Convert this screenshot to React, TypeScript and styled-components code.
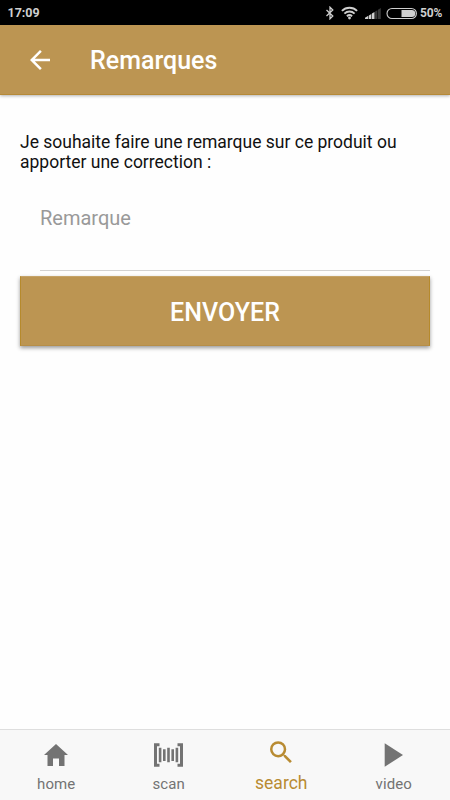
import React from 'react';
import styled, { createGlobalStyle } from 'styled-components';

const Global = createGlobalStyle`
  * { box-sizing: border-box; }
  html, body { margin: 0; background: #fff; }
  body, button, textarea { font-family: Roboto, sans-serif; }
  button { border: 0; padding: 0; cursor: pointer; }
  svg { display: block; }
`;

const Screen = styled.div`
  width: 100%;
  height: 100vh;
  display: flex;
  flex-direction: column;
  background: #fefefe;
  overflow: hidden;
`;

const StatusBar = styled.div`
  height: 25px;
  flex: none;
  display: flex;
  align-items: center;
  justify-content: space-between;
  padding: 0 8px 0 7.5px;
  background: #000;
  color: #cfcfcf;
  font-size: 12.5px;
  font-weight: 700;
`;

const StatusIcons = styled.div`
  display: flex;
  align-items: center;
`;

const Percent = styled.span`
  width: 22px;
  font-size: 12px;
  letter-spacing: -0.1px;
  margin-left: 3px;
`;

const Header = styled.header`
  height: 70px;
  flex: none;
  display: flex;
  align-items: center;
  padding-left: 30px;
  background: #bc9552;
  border-bottom: 1px solid #b68a38;
  box-shadow: 0 1px 3px rgba(0, 0, 0, 0.3);
`;

const BackButton = styled.button`
  width: 60px;
  background: none;
  color: #fff;
`;

const Title = styled.h1`
  margin: 2px 0 0;
  color: #fff;
  font-size: 25px;
  line-height: 30px;
  font-weight: 500;
`;

const Content = styled.main`
  flex: 1;
  padding: 37px 20px 0;
`;

const Intro = styled.p`
  margin: 0;
  font-size: 17.5px;
  line-height: 20px;
  color: #111;
`;

const Field = styled.div`
  height: 99px;
  margin-left: 20px;
  padding-top: 33px;
  border-bottom: 1px solid #d2d2d2;
`;

const Remark = styled.textarea`
  display: block;
  width: 100%;
  height: 50px;
  padding: 0;
  border: 0;
  outline: 0;
  resize: none;
  background: transparent;
  font-size: 20px;
  line-height: 26px;
  &::placeholder { color: #999; opacity: 1; }
`;

const Submit = styled.button`
  display: block;
  width: 100%;
  height: 70px;
  margin-top: 5px;
  padding-top: 2px;
  background: #bc9552;
  border: 1px solid #b68a2c;
  border-top-color: #c5a368;
  border-bottom-color: #b68e48;
  color: #fff;
  font-size: 25px;
  font-weight: 500;
  letter-spacing: 0.05px;
  box-shadow: 0 2px 4px rgba(0, 0, 0, 0.4);
`;

const TabBar = styled.nav`
  height: 71px;
  flex: none;
  display: grid;
  grid-template-columns: repeat(4, 1fr);
  border-top: 1px solid #dedede;
  background: #f8f8f8;
`;

const Tab = styled.button<{ $active?: boolean }>`
  display: flex;
  flex-direction: column;
  align-items: center;
  justify-content: flex-start;
  padding-top: ${p => (p.$active ? 11 : 13)}px;
  background: none;
  color: ${p => (p.$active ? '#b88b32' : '#737373')};
`;

const TabLabel = styled.span<{ $active?: boolean }>`
  font-size: ${p => (p.$active ? 17.5 : 15)}px;
  line-height: 20px;
  margin-top: ${p => (p.$active ? 8 : 7)}px;
  letter-spacing: ${p => (p.$active ? 0 : 0.1)}px;
`;

const tabs = [
  { label: 'home', width: 24, path: 'M12 1L0 12h3.5v11H9v-7.5h6V23h5.5V12H24z' },
  {
    label: 'scan',
    width: 29,
    path: 'M0 .2h5.5v3H3v17.6h2.5v3H0zM23.5.2H29v23.6h-5.5v-3H26V3.2h-2.5zM4.8 4.7h2.6v14.6H4.8zM9 6.2h2.6V18H9zM13.2 4.7h2.6v14.6h-2.6zM17.400 6.2H20V18h-2.600zM21.600 4.7h2.600v14.600h-2.600z',
  },
  {
    label: 'search',
    width: 24,
    active: true,
    viewBox: '2.2 2.9 19.2 19.2',
    path: 'M15.5 14h-.79l-.28-.27A6.47 6.47 0 0 0 16 9.5 6.5 6.5 0 1 0 9.5 16c1.61 0 3.09-.59 4.23-1.57l.27.28v.79l5 4.99L20.49 19zM9.5 14a4.5 4.5 0 1 1 0-9 4.5 4.5 0 0 1 0 9z',
  },
  { label: 'video', width: 19, path: 'M.7.2v23.6L19 12z' },
];

export default function App() {
  return (
    <Screen>
      <Global />
      <StatusBar>
        <span>17:09</span>
        <StatusIcons>
          <svg width="92" height="14" viewBox="325 5 92 14" fill="none">
            <path d="M326.5 9l6.3 6-2.8 2.8V6.2l2.8 2.8-6.300 6" stroke="#cfcfcf" strokeWidth="1.3" />
            <path
              d="M341.9 9.9a10.8 10.8 0 0 1 15.2 0M344.4 12.600a7.400 7.400 0 0 1 10.200 0M346.900 15.200a3.900 3.900 0 0 1 5.200 0"
              stroke="#cfcfcf"
              strokeWidth="1.9"
            />
            <circle cx="349.5" cy="17" r="1.4" fill="#cfcfcf" />
            <path d="M365 18v-1.200l3.300-2V18zM368.900 18v-3.500l2.400-1.500v5zM371.900 18v-5.400l2.600-1.600v7z" fill="#cfcfcf" />
            <path d="M375.100 18v-7.400l2.300-1.400V18zM378 18V8.800l2.800-1.800v11z" fill="#383838" />
            <rect x="387" y="7.5" width="29.4" height="10" rx="5" stroke="#cfcfcf" strokeWidth="1.1" />
            <path d="M401.5 9h10.3a3.5 3.5 0 0 1 0 7h-10.3z" fill="#cfcfcf" />
          </svg>
          <Percent>50%</Percent>
        </StatusIcons>
      </StatusBar>
      <Header>
        <BackButton aria-label="Retour">
          <svg width="20" height="20" viewBox="4 4 16 16" fill="currentColor">
            <path d="M20 11H7.83l5.59-5.59L12 4l-8 8 8 8 1.41-1.41L7.83 13H20z" />
          </svg>
        </BackButton>
        <Title>Remarques</Title>
      </Header>
      <Content>
        <Intro>Je souhaite faire une remarque sur ce produit ou apporter une correction :</Intro>
        <Field>
          <Remark placeholder="Remarque" aria-label="Remarque" />
        </Field>
        <Submit>ENVOYER</Submit>
      </Content>
      <TabBar>
        {tabs.map(tab => (
          <Tab key={tab.label} $active={tab.active}>
            <svg width={tab.width} height="24" viewBox={tab.viewBox ?? `0 0 ${tab.width} 24`} fill="currentColor">
              <path d={tab.path} />
            </svg>
            <TabLabel $active={tab.active}>{tab.label}</TabLabel>
          </Tab>
        ))}
      </TabBar>
    </Screen>
  );
}
